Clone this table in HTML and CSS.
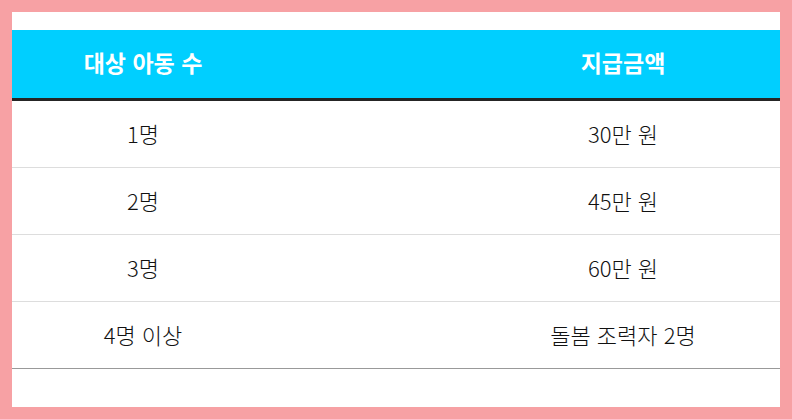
FILE: index.html
```html
<!DOCTYPE html>
<html lang="ko">
<head>
<meta charset="utf-8">
<link rel="stylesheet" href="styles.css">
</head>
<body>
<div class="frame">
  <div class="table">
    <div class="row head">
      <div class="c1">대상 아동 수</div>
      <div class="c2">지급금액</div>
    </div>
    <div class="row">
      <div class="c1">1명</div>
      <div class="c2">30만 원</div>
    </div>
    <div class="row">
      <div class="c1">2명</div>
      <div class="c2">45만 원</div>
    </div>
    <div class="row">
      <div class="c1">3명</div>
      <div class="c2">60만 원</div>
    </div>
    <div class="row last">
      <div class="c1">4명 이상</div>
      <div class="c2">돌봄 조력자 2명</div>
    </div>
  </div>
</div>
</body>
</html>
```
FILE: styles.css
```css
* { box-sizing: border-box; }
html, body { margin: 0; padding: 0; }
body {
  width: 792px;
  height: 419px;
  background: #f7a1a4;
  padding: 12px;
  font-family: "Noto Sans CJK KR", "Noto Sans", sans-serif;
}
.frame {
  background: #fff;
  height: 395px;
  padding-top: 18px;
}
.row {
  display: grid;
  grid-template-columns: 262px 1fr;
  height: 67px;
  align-items: center;
  padding-bottom: 3px;
  border-bottom: 1px solid #dddddd;
  font-size: 22px;
  font-weight: 300;
  color: #111;
}
.row .c1 { text-align: center; }
.row .c2 { text-align: center; padding-left: 192px; }
.row.head {
  background: #00cfff;
  color: #fff;
  font-weight: 700;
  font-size: 23px;
  border-bottom: 3px solid #252525;
  height: 71px;
  padding-bottom: 5px;
}
.row.last { border-bottom: 1px solid #999; }
```
